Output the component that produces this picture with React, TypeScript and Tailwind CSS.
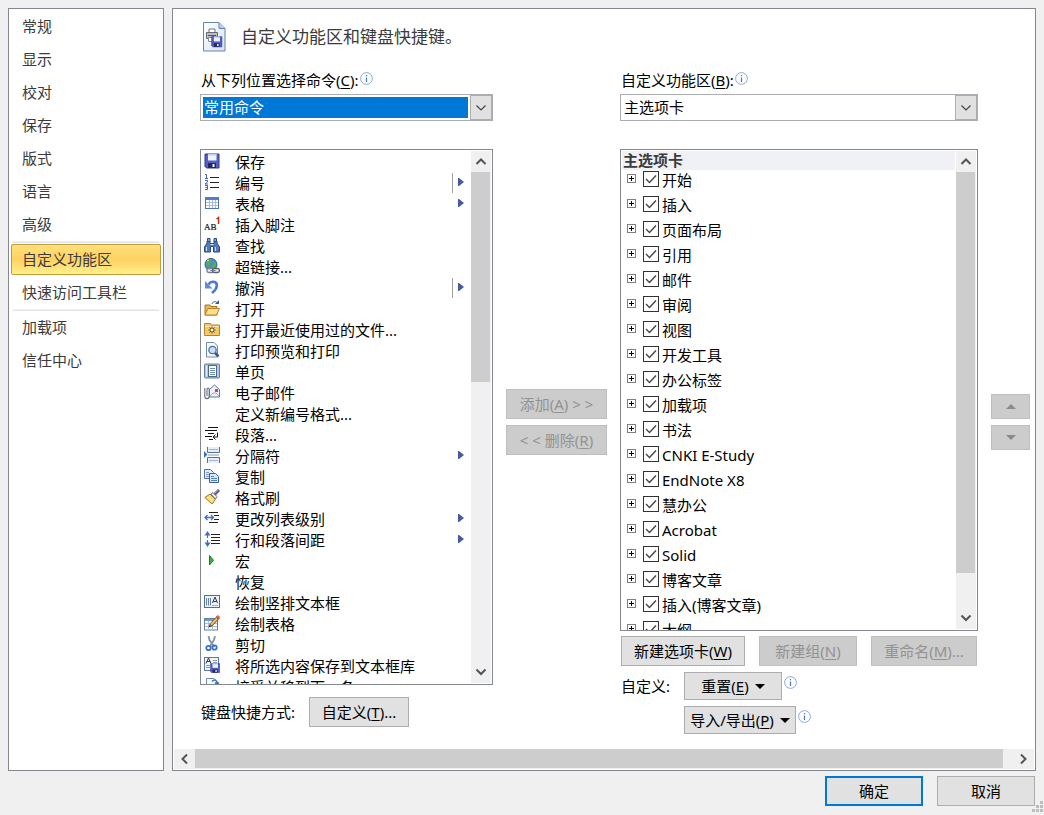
import { useState, type ReactNode } from 'react';
import clsx from 'clsx';

const FloppyShape = () => (
  <>
    <path d="M1 1h14v14H2.5L1 13.500z" fill="#5560c4" stroke="#30398f" />
    <rect x="4" y="1" width="8.500" height="6.500" fill="#eef2fd" />
    <rect x="4" y="1" width="8.500" height="1.500" fill="#c3cdf0" />
    <rect x="4" y="10" width="8" height="5" fill="#23285e" />
    <rect x="8.500" y="11" width="2" height="3" fill="#f4f6ff" />
  </>
);

const PageShape = () => (
  <path d="M2.500 .5h7.500l3.500 3.500v11h-11z" fill="#f6f9fe" stroke="#7189b0" />
);

const icons: Record<string, ReactNode> = {
  save: <FloppyShape />,
  numbering: (
    <>
      <path d="M6 3.500h9M6 8.500h9M6 13.500h9" stroke="#222" />
      <path d="M1 .5h1.500V4.500M1 4.500h3M1 6.500h2.500v1.500L1 10h3M1 11.500h2.500v4H1M1.500 13.500h2" stroke="#3f63b0" fill="none" />
    </>
  ),
  table: (
    <>
      <rect x="1.500" y="2.500" width="13" height="11" fill="#fff" stroke="#4d74b8" />
      <rect x="1" y="2" width="14" height="3" fill="#4f7dcb" />
      <path d="M2 7.500h12M2 10.500h12M5.500 5v8M8.500 5v8M11.500 5v8" stroke="#a7bfe3" />
    </>
  ),
  footnote: (
    <>
      <text x="0" y="14" fontSize="9" fill="#111" stroke="#111" strokeWidth=".2" fontFamily="Liberation Serif, serif">AB</text>
      <path d="M12.500 3l2-1.500V8" stroke="#cc2a16" strokeWidth="1.500" fill="none" />
    </>
  ),
  find: (
    <>
      <path d="M3 4h3v2.500h4V4h3v2l2.500 4v5H9.500V9.500h-3V15H.5v-5L3 6z" fill="#5279b8" stroke="#294b87" />
      <path d="M3.500 1.500h2.500v3H3.500zM10 1.500h2.500v3H10z" fill="#87a8d9" stroke="#294b87" />
      <path d="M2.500 10v4M11.500 10v4" stroke="#c7dbf6" />
      <path d="M6.500 7.500h3" stroke="#dce9fa" />
    </>
  ),
  link: (
    <>
      <circle cx="7" cy="6.500" r="6" fill="#4b8bd0" stroke="#2c6090" />
      <path d="M3 3c2-2 4-2 5-1L7 4 5 5l1 3-2 1-2-3zM9 5l3-1v4l-2 2-2-2z" fill="#59ae45" />
      <path d="M3 3l2-1" stroke="#cdeec5" />
      <rect x="3" y="10.500" width="7" height="4" rx="2" fill="#eceff3" stroke="#7a8390" strokeWidth="1.300" />
      <rect x="8.500" y="10.500" width="7" height="4" rx="2" fill="#eceff3" stroke="#596370" strokeWidth="1.300" />
      <path d="M6.500 12.500h5" stroke="#707985" />
    </>
  ),
  undo: (
    <>
      <path d="M4.500 5.500C7 1.500 13 2 12.800 6.500c0 3.500-2.300 5.500-4.800 7.500" fill="none" stroke="#4a7ad2" strokeWidth="2.600" />
      <path d="M1 2v7.500h7.500z" fill="#5c8be0" />
    </>
  ),
  open: (
    <>
      <path d="M1 5h5l1 1.500h6V15H1z" fill="#e9b94f" stroke="#a87720" />
      <path d="M1 15l3-6.500h11.500L12.500 15z" fill="#ffe08a" stroke="#b5852d" />
      <path d="M8 4c1-3 4-3 5-1" stroke="#3d5f94" fill="none" />
      <path d="M11 4h4V0z" fill="#3d5f94" />
    </>
  ),
  recent: (
    <>
      <path d="M.5 3.500v-1h6l1 1.500h8v10.500H.5z" fill="#f6c965" stroke="#b18432" />
      <path d="M1 5.500h14" stroke="#ffe6a6" />
      <path d="M8 5.500v7M4.500 9h7M5.500 6.500l5 5M10.500 6.500l-5 5" stroke="#483a28" strokeWidth=".9" />
      <rect x="7" y="8" width="2" height="2" fill="#fff" />
    </>
  ),
  preview: (
    <>
      <PageShape />
      <circle cx="8.500" cy="8" r="3.700" fill="#c4dff6" stroke="#536d8e" strokeWidth="1.200" />
      <path d="M11.200 11l3.300 3.500" stroke="#315b94" strokeWidth="2.600" />
    </>
  ),
  page: (
    <>
      <rect x=".5" y="1" width="15" height="14" rx="1" fill="#b1c8e8" stroke="#5b7eae" />
      <rect x="4.500" y="2.500" width="8" height="11" fill="#fff" stroke="#4e6689" />
      <path d="M6 5.500h5M6 7.500h5M6 9.500h5M6 11.500h5" stroke="#738baf" />
      <path d="M2.500 3v10" stroke="#e4effd" />
    </>
  ),
  mail: (
    <>
      <path d="M5.500 5.500l5-4.500 5 4.500v7.500h-10z" fill="#edf3fc" stroke="#60779c" />
      <path d="M6 12l3-3h3l3 3" fill="none" stroke="#9baecb" />
      <rect x="11" y="5" width="3" height="3" fill="#dc4435" />
      <path d="M.8 4v8c0 3.500 4.400 3.500 4.400 0V5.500c0-2-2.200-2-2.200 0V12" fill="none" stroke="#626d7e" strokeWidth="1.100" />
    </>
  ),
  paragraph: (
    <path d="M4 1.500h10M1 4.500h12M4 7.500h6M1 10.500h7M5 13.500h4M13.500 6.500v4.500H9.500M11.500 8.500L9 11l2.500 2.500" fill="none" stroke="#111" />
  ),
  breaks: (
    <>
      <path d="M3.500 0v5.500h12V0M3.500 16v-5.500h12V16" fill="#e7effa" stroke="#526f9d" />
      <path d="M5 2.500h9M5 13.500h9" stroke="#9fb4d3" />
      <path d="M4 8h11" stroke="#8395ab" />
      <path d="M0 4v7L3.500 7.500z" fill="#3b6fca" />
    </>
  ),
  copy: (
    <>
      <path d="M.5 1.500h6l3 3v6h-9z" fill="#e3edfc" stroke="#526fb0" />
      <path d="M2 4.500h3M2 6.500h6M2 8.500h4" stroke="#7e9bcf" />
      <path d="M5.500 5.500h6l3 3v6h-9z" fill="#d9e7fc" stroke="#3e60a7" />
      <path d="M7 8.500h3M7 10.500h6M7 12.500h6" stroke="#5d80bd" />
    </>
  ),
  painter: (
    <>
      <path d="M.8 8.500L6 5l5.500 5.500L8 15z" fill="#f7d974" stroke="#937b35" />
      <path d="M4 8l5 5" stroke="#fff2ba" />
      <path d="M7 5l2-1.500 4 4L11.500 10z" fill="#eee" stroke="#777" />
      <path d="M10.500 5.500L15 1" stroke="#5c5598" strokeWidth="3" />
      <path d="M10.500 4.500l3.500-3.500" stroke="#a7a3d3" />
    </>
  ),
  level: (
    <>
      <path d="M5 2.500h9M10 5.500h5M10 9.500h5M5 12.500h9" stroke="#222" />
      <path d="M1 7.500h8M3.500 5L1 7.500 3.500 10M7 5L9.500 7.500 7 10" fill="none" stroke="#416fc7" strokeWidth="1.300" />
    </>
  ),
  spacing: (
    <>
      <path d="M7 3.500h9M7 6.500h9M7 9.500h9M7 12.500h9" stroke="#222" />
      <path d="M3.500 2v5M3.500 9v5" stroke="#416fc7" strokeWidth="1.200" />
      <path d="M.5 4.500l3-4.500 3 4.500zM.5 11.500l3 4.500 3-4.500z" fill="#416fc7" />
    </>
  ),
  macro: <path d="M5.500 3.500v9.500l4-4.700z" fill="#3db33c" stroke="#168323" />,
  vertical: (
    <>
      <rect x=".5" y="1.500" width="15" height="12" fill="#edf3fc" stroke="#546d91" />
      <path d="M2.500 4v7.500M4.500 4v7.500M6.500 4v7.500" stroke="#6484b3" />
      <path d="M8.500 9L11 3l2.500 6M9.500 7.500h3" fill="none" stroke="#333" />
      <path d="M8 11.500h6" stroke="#9fb0ca" />
    </>
  ),
  draw: (
    <>
      <rect x=".5" y="3.500" width="13" height="11.500" fill="#fff" stroke="#617fab" />
      <path d="M1 5h12" stroke="#6d9bd7" strokeWidth="2" />
      <path d="M1 8.500h12M1 11.500h12M4.500 6v9M8.500 6v9" stroke="#adc1df" />
      <path d="M6.500 10.500l8-8.500" stroke="#745129" strokeWidth="3.600" />
      <path d="M7 9.800l6-6.300" stroke="#f4bd58" strokeWidth="2" />
      <path d="M13 3.300l2-2.200" stroke="#d15f54" strokeWidth="3" />
      <path d="M4.500 12.500l1-3 2 2z" fill="#333" />
    </>
  ),
  cut: (
    <>
      <path d="M4.500 0l1 4 5 7M11 0l-1 4-4.500 7" fill="none" stroke="#8393aa" strokeWidth="1.800" />
      <circle cx="4.500" cy="12" r="2.200" fill="none" stroke="#3a70c7" strokeWidth="1.800" />
      <circle cx="10.500" cy="11.500" r="2.200" fill="none" stroke="#3a70c7" strokeWidth="1.800" />
    </>
  ),
  gallery: (
    <>
      <rect x=".5" y=".5" width="14" height="13" fill="#f1f5fc" stroke="#6079a2" />
      <path d="M2 6.500l2.500-5.500L7 6.500M3 4.500h3" fill="none" stroke="#333" />
      <path d="M9 3.500h4M9 5.500h4M2 8.500h4M2 10.500h4" stroke="#8299be" />
      <g transform="translate(6 6) scale(.64)"><FloppyShape /></g>
    </>
  ),
  accept: (
    <>
      <PageShape />
      <path d="M8 3.500c3-3 5-1 5 2M11 4.500l2 2 2-2" fill="none" stroke="#3c69bd" strokeWidth="1.300" />
    </>
  ),
};

type Command = { label: string; icon?: string; arrow?: boolean; split?: boolean };

const commands: Command[] = [
  { label: '保存', icon: 'save' },
  { label: '编号', icon: 'numbering', arrow: true, split: true },
  { label: '表格', icon: 'table', arrow: true },
  { label: '插入脚注', icon: 'footnote' },
  { label: '查找', icon: 'find' },
  { label: '超链接...', icon: 'link' },
  { label: '撤消', icon: 'undo', arrow: true, split: true },
  { label: '打开', icon: 'open' },
  { label: '打开最近使用过的文件...', icon: 'recent' },
  { label: '打印预览和打印', icon: 'preview' },
  { label: '单页', icon: 'page' },
  { label: '电子邮件', icon: 'mail' },
  { label: '定义新编号格式...' },
  { label: '段落...', icon: 'paragraph' },
  { label: '分隔符', icon: 'breaks', arrow: true },
  { label: '复制', icon: 'copy' },
  { label: '格式刷', icon: 'painter' },
  { label: '更改列表级别', icon: 'level', arrow: true },
  { label: '行和段落间距', icon: 'spacing', arrow: true },
  { label: '宏', icon: 'macro' },
  { label: '恢复' },
  { label: '绘制竖排文本框', icon: 'vertical' },
  { label: '绘制表格', icon: 'draw' },
  { label: '剪切', icon: 'cut' },
  { label: '将所选内容保存到文本框库', icon: 'gallery' },
  { label: '接受并移到下一条', icon: 'accept' },
];

const tabs = [
  '开始', '插入', '页面布局', '引用', '邮件', '审阅', '视图', '开发工具', '办公标签', '加载项',
  '书法', 'CNKI E-Study', 'EndNote X8', '慧办公', 'Acrobat', 'Solid', '博客文章', '插入(博客文章)', '大纲',
];

const navGroups = [
  ['常规', '显示', '校对', '保存', '版式', '语言', '高级'],
  ['自定义功能区', '快速访问工具栏'],
  ['加载项', '信任中心'],
];

const chevrons = {
  up: 'M1.500 8L6 3.500l4.500 4.500',
  down: 'M1.500 3.500L6 8l4.500-4.500',
  left: 'M8 1.500L3.500 6 8 10.500',
  right: 'M4 1.500L8.500 6 4 10.500',
};

function Chevron({ dir, thin = false }: { dir: keyof typeof chevrons; thin?: boolean }) {
  return (
    <svg width="12" height="12" viewBox="0 0 12 12" aria-hidden="true">
      <path d={chevrons[dir]} fill="none" stroke={thin ? '#444' : '#555'} strokeWidth={thin ? 1.2 : 2} />
    </svg>
  );
}

function InfoIcon() {
  return (
    <svg className="mb-1 shrink-0" width="13" height="13" viewBox="0 0 13 13" aria-hidden="true">
      <circle cx="6.500" cy="6.500" r="5.900" fill="#fbfdff" stroke="#8eaad6" />
      <path d="M6.500 5.500v4.500M6.500 3v1.300" stroke="#4e78b8" strokeWidth="1.200" />
    </svg>
  );
}

function Key({ k }: { k: string }) {
  return <>(<span className="underline underline-offset-2">{k}</span>)</>;
}

function PushButton({ children, className, disabled }: { children: ReactNode; className?: string; disabled?: boolean }) {
  return (
    <button
      type="button"
      disabled={disabled}
      className={clsx(
        'flex items-center justify-center whitespace-nowrap border',
        disabled ? 'border-[#bfbfbf] bg-[#cccccc] text-[#929292]' : 'border-[#adadad] bg-[#e1e1e1] text-black',
        className,
      )}
    >
      {children}
    </button>
  );
}

function ComboBox({ id, options, active }: { id: string; options: string[]; active?: boolean }) {
  return (
    <div className="flex h-[27px] border border-[#abadb3] bg-white">
      <div className="flex min-w-0 flex-1 p-[2px]">
        <select
          id={id}
          className={clsx(
            'w-full appearance-none pb-0.5 pl-px leading-5 outline-none',
            active ? 'bg-[#0078d7] text-white' : 'bg-white text-black',
          )}
        >
          {options.map((o) => <option key={o}>{o}</option>)}
        </select>
      </div>
      <label htmlFor={id} className="flex w-[22px] items-center justify-center border border-[#adadad] bg-[#e1e1e1]">
        <Chevron dir="down" thin />
      </label>
    </div>
  );
}

function VerticalScrollbar({ thumb }: { thumb: string }) {
  return (
    <div className="my-px mr-px flex w-5 shrink-0 flex-col bg-[#f0f0f0]">
      <button type="button" aria-label="向上滚动" className="flex h-[21px] shrink-0 items-center justify-center">
        <Chevron dir="up" />
      </button>
      <div className="min-h-0 flex-1">
        <div className={clsx('mr-px bg-[#cdcdcd]', thumb)} />
      </div>
      <button type="button" aria-label="向下滚动" className="flex h-[23px] shrink-0 items-center justify-center">
        <Chevron dir="down" />
      </button>
    </div>
  );
}

function CommandRow({ label, icon, arrow, split }: Command) {
  return (
    <li role="option" aria-selected="false" className="flex h-[21px] items-center pr-[7px] pl-[3px]">
      <svg className="mr-[15px] mb-0.5 shrink-0" width="16" height="16" viewBox="0 0 16 16" aria-hidden="true">
        {icon && icons[icon]}
      </svg>
      <span className="flex-1 whitespace-nowrap leading-5">{label}</span>
      {split && <span className="mr-[5px] h-5 w-px bg-[#a0a0a0]" />}
      {arrow && (
        <svg className="mb-0.5" width="6" height="8" viewBox="0 0 6 8" aria-hidden="true">
          <path d="M0 0h1l5 4-5 4H0z" fill="#465a9c" />
        </svg>
      )}
    </li>
  );
}

function TabRow({ name }: { name: string }) {
  return (
    <li className="flex h-[25px] items-start pt-px pl-[5px]">
      <button type="button" aria-label={`展开 ${name}`} className="mt-[3px] mr-[7px]">
        <svg className="block" width="9" height="9" viewBox="0 0 9 9" aria-hidden="true">
          <rect x=".5" y=".5" width="8" height="8" fill="#fff" stroke="#808080" />
          <path d="M2 4.500h5M4.500 2v5" stroke="#000" />
        </svg>
      </button>
      <label className="flex items-start">
        <span className="grid">
          <input
            type="checkbox"
            defaultChecked
            className="peer col-start-1 row-start-1 size-4 appearance-none border border-[#333333] bg-white"
          />
          <svg
            className="pointer-events-none invisible col-start-1 row-start-1 peer-checked:visible"
            width="16"
            height="16"
            viewBox="0 0 16 16"
            aria-hidden="true"
          >
            <path d="M3 8l3.500 3.500L13 4.500" fill="none" stroke="#444" strokeWidth="1.400" />
          </svg>
        </span>
        <span className="ml-[3px] whitespace-nowrap leading-[18px]">{name}</span>
      </label>
    </li>
  );
}

function SideNav() {
  const [current, setCurrent] = useState('自定义功能区');
  return (
    <nav className="w-[156px] shrink-0 border border-[#828790] bg-white px-0.5 pt-px text-[#3b3b3b]">
      {navGroups.map((group, i) => (
        <div key={group[0]}>
          {i > 0 && <div className="mx-0.5 h-0.5 border-b border-[#dfe2e8] bg-[#f0f1f4]" />}
          {group.map((item) => (
            <div key={item} className="flex h-[33px] py-px">
              <button
                type="button"
                onClick={() => setCurrent(item)}
                className={clsx(
                  'flex-1 rounded-xs border pb-0.5 pl-2.5 text-left leading-5',
                  item === current
                    ? 'border-[#c29b3d] bg-linear-to-b from-[#ffe07a] via-[#ffd263] to-[#fff08a]'
                    : 'border-transparent',
                )}
              >
                {item}
              </button>
            </div>
          ))}
        </div>
      ))}
    </nav>
  );
}

function TitleIcon() {
  return (
    <svg width="24" height="31" viewBox="0 0 24 31" aria-hidden="true">
      <defs>
        <linearGradient id="sheet" x1="0" y1="0" x2="1" y2="1">
          <stop offset="0" stopColor="#ffffff" />
          <stop offset="1" stopColor="#d5e3f4" />
        </linearGradient>
      </defs>
      <path d="M.5 .5h15.500l6 6v22.500H.5z" fill="url(#sheet)" stroke="#6b83ab" />
      <path d="M16 .5v6h6" fill="#b9cfec" stroke="#6b83ab" />
      <path d="M6 11V7h6v4" fill="#fff" stroke="#777" />
      <path d="M3.500 10.500h11v6h-11z" fill="#b9bcc3" stroke="#666a73" />
      <path d="M5 13.500h8" stroke="#555" />
      <path d="M5.500 15.500h6v4h-6z" fill="#fff" stroke="#888" />
      <g transform="translate(8 14) scale(.72)"><FloppyShape /></g>
    </svg>
  );
}

function Caret({ dir = 'down', tone = '#000' }: { dir?: 'up' | 'down'; tone?: string }) {
  return (
    <svg width="10" height="5" viewBox="0 0 10 5" aria-hidden="true">
      <path d={dir === 'down' ? 'M0 0h10L5 5z' : 'M0 5h10L5 0z'} fill={tone} />
    </svg>
  );
}

export default function App() {
  return (
    <div className="flex min-h-screen flex-col bg-[#f0f0f0] pt-2 pl-2 font-['Noto_Sans','Noto_Sans_CJK_SC',sans-serif] text-[15px] text-black">
      <div className="flex flex-1 gap-2 pr-2">
        <SideNav />
        <main className="flex min-w-0 flex-1 flex-col border border-[#828790] bg-white">
          <div className="flex-1 pr-[5px] pl-[27px]">
            <header className="flex h-[58px] items-center gap-[14px] pb-0.5 pl-[3px]">
              <TitleIcon />
              <h1 className="text-[17px] text-[#3b3b3b]">自定义功能区和键盘快捷键。</h1>
            </header>

            <div className="grid grid-cols-[minmax(0,293fr)_101px_minmax(0,358fr)_39px] gap-x-[13px] gap-y-7">
              <div className="col-start-1">
                <div className="flex h-[27px] items-center gap-px pl-px">
                  <label htmlFor="source">从下列位置选择命令<Key k="C" />:</label>
                  <InfoIcon />
                </div>
                <ComboBox id="source" options={['常用命令', '所有命令']} active />
              </div>
              <div className="col-start-3">
                <div className="flex h-[27px] items-center gap-px pl-px">
                  <label htmlFor="target">自定义功能区<Key k="B" />:</label>
                  <InfoIcon />
                </div>
                <ComboBox id="target" options={['主选项卡', '工具选项卡', '所有选项卡']} />
              </div>

              <section className="col-start-1">
                <div className="flex h-[536px] overflow-hidden border border-[#828790]">
                  <ul role="listbox" aria-label="命令" className="min-w-0 flex-1 overflow-hidden pt-px">
                    {commands.map((c) => <CommandRow key={c.label} {...c} />)}
                  </ul>
                  <VerticalScrollbar thumb="h-[210px]" />
                </div>
                <div className="mt-3 flex h-[30px] items-stretch gap-[14px] pl-px">
                  <span className="self-center">键盘快捷方式:</span>
                  <PushButton className="w-[100px]">自定义<Key k="T" />...</PushButton>
                </div>
              </section>

              <div className="flex flex-col justify-center gap-1.5 pb-[39px]">
                <PushButton disabled className="h-[30px]">添加<Key k="A" />&nbsp;&gt;&nbsp;&gt;</PushButton>
                <PushButton disabled className="h-[30px]">&lt;&nbsp;&lt;&nbsp;删除<Key k="R" /></PushButton>
              </div>

              <section>
                <div className="flex h-[482px] overflow-hidden border border-[#828790]">
                  <div className="min-w-0 flex-1 overflow-hidden py-px pl-px">
                    <h2 className="mr-px h-[19px] bg-[#eff1f7] pl-px font-bold leading-[18px] text-[#3b3b3b]">主选项卡</h2>
                    <ul>{tabs.map((t) => <TabRow key={t} name={t} />)}</ul>
                  </div>
                  <VerticalScrollbar thumb="h-[401px]" />
                </div>
                <div className="mt-[5px] flex h-[30px] justify-between px-px">
                  <PushButton className="w-[124px]">新建选项卡<Key k="W" /></PushButton>
                  <PushButton disabled className="w-[98px]">新建组<Key k="N" /></PushButton>
                  <PushButton disabled className="w-[106px]">重命名<Key k="M" />...</PushButton>
                </div>
                <div className="mt-1.5 grid grid-cols-[63px_1fr] gap-y-1.5 pl-px">
                  <span className="self-center">自定义:</span>
                  <div className="flex h-7 gap-0.5">
                    <PushButton className="w-[98px] gap-1.5">
                      <span>重置<Key k="E" /></span>
                      <Caret />
                    </PushButton>
                    <span className="pt-1"><InfoIcon /></span>
                  </div>
                  <div className="col-start-2 flex h-7 gap-0.5">
                    <PushButton className="w-28 gap-1.5">
                      <span>导入/导出<Key k="P" /></span>
                      <Caret />
                    </PushButton>
                    <span className="pt-1"><InfoIcon /></span>
                  </div>
                </div>
              </section>

              <div className="flex flex-col justify-center gap-1.5 pb-[39px]">
                <PushButton disabled className="h-[25px]"><Caret dir="up" tone="#8a8a8a" /></PushButton>
                <PushButton disabled className="h-[25px]"><Caret tone="#8a8a8a" /></PushButton>
              </div>
            </div>
          </div>

          <div className="mx-px mb-px flex h-5 shrink-0 bg-[#f0f0f0]">
            <button type="button" aria-label="向左滚动" className="flex w-[21px] items-center justify-center">
              <Chevron dir="left" />
            </button>
            <div className="flex-1 pb-px">
              <div className="h-full bg-[#cdcdcd]" />
            </div>
            <button type="button" aria-label="向右滚动" className="flex w-[31px] items-center justify-end pr-[5px]">
              <Chevron dir="right" />
            </button>
          </div>
        </main>
      </div>

      <footer className="flex h-11 shrink-0 justify-end gap-[14px] pt-[5px]">
        <button type="button" className="h-[30px] w-[98px] border-2 border-[#0078d7] bg-[#e1e1e1]">确定</button>
        <div className="flex">
          <PushButton className="h-[30px] w-[98px]">取消</PushButton>
          <svg className="mt-auto mr-px -ml-1 mb-0.5" width="12" height="12" viewBox="0 0 12 12" aria-hidden="true">
            <path
              d="M9 0h3v3H9zM5 4h3v3H5zM9 4h3v3H9zM1 8h3v3H1zM5 8h3v3H5zM9 8h3v3H9z"
              fill="#bdbdbd"
            />
          </svg>
        </div>
      </footer>
    </div>
  );
}
